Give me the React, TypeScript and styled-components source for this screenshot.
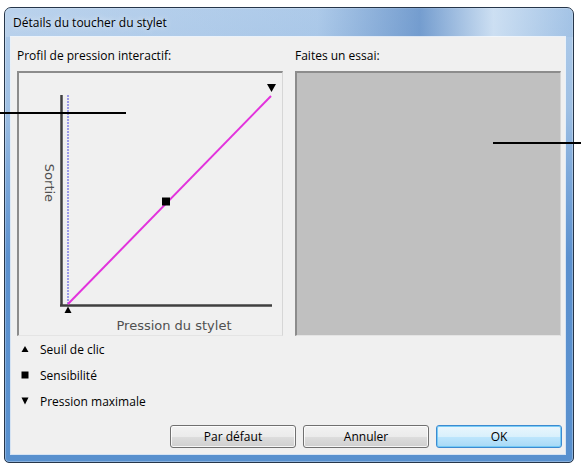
import React from "react";
import styled, { createGlobalStyle } from "styled-components";

const GlobalStyle = createGlobalStyle`
  html, body {
    margin: 0;
    padding: 0;
    background: #ffffff;
  }
  body {
    font-family: "Open Sans", "Noto Sans", sans-serif;
  }
`;

const Page = styled.div`
  position: relative;
  width: 581px;
  height: 468px;
  box-sizing: border-box;
  padding: 7px 7px 5px 4px;
  overflow: hidden;
`;

const Window = styled.div`
  height: 100%;
  box-sizing: border-box;
  display: flex;
  flex-direction: column;
  border: 1px solid #26364a;
  border-radius: 7px 7px 5px 5px;
  background: linear-gradient(
    to bottom,
    #aecbea 0%,
    #9fc0e4 22%,
    #7faadb 36%,
    #5c91cf 55%,
    #5890ce 100%
  );
  box-shadow: inset 0 0 0 1px rgba(255, 255, 255, 0.3);
`;

const TitleBar = styled.div`
  height: 29px;
  flex: none;
  display: flex;
  align-items: center;
  padding-left: 8px;
  font-size: 12px;
  color: #000;
  border-radius: 6px 6px 0 0;
  background: linear-gradient(
    to right,
    rgba(196, 216, 238, 0.55) 0%,
    rgba(170, 198, 230, 0.2) 55%,
    rgba(70, 120, 185, 0.55) 73%,
    rgba(215, 230, 245, 0.75) 86%,
    rgba(140, 178, 220, 0.3) 100%
  );
  text-shadow: 0 0 6px rgba(255, 255, 255, 0.9);
`;

const Frame = styled.div`
  flex: 1;
  display: flex;
  padding: 0 8px 8px 6px;
`;

const Client = styled.div`
  flex: 1;
  display: flex;
  flex-direction: column;
  padding: 11px 3px 6px 6px;
  background: #f0f0f0;
  box-shadow: 0 0 0 1px rgba(255, 255, 255, 0.75);
`;

const Panels = styled.div`
  display: grid;
  grid-template-columns: 266px 266px;
  column-gap: 12px;
`;

const Panel = styled.div`
  display: flex;
  flex-direction: column;
`;

const PanelLabel = styled.div`
  height: 16px;
  line-height: 16px;
  font-size: 12px;
  color: #000;
  margin-bottom: 7px;
`;

const Box = styled.div<{ $fill: string }>`
  height: 265px;
  box-sizing: border-box;
  background: ${(p) => p.$fill};
  border-top: 2px solid #8c8c8c;
  border-left: 2px solid #8c8c8c;
  border-right: 1px solid #d6d6d6;
  border-bottom: 1px solid #e4e4e4;
`;

const Legend = styled.div`
  display: flex;
  flex-direction: column;
  padding-left: 4px;
`;

const LegendRow = styled.div`
  height: 26px;
  display: flex;
  align-items: center;
  gap: 11px;
  font-size: 12px;
  color: #000;
`;

const LegendIcon = styled.svg`
  width: 8px;
  height: 8px;
  flex: none;
`;

const ButtonRow = styled.div`
  margin-top: auto;
  display: flex;
  justify-content: flex-end;
  gap: 7px;
`;

const Button = styled.button<{ $default?: boolean }>`
  width: 126px;
  height: 23px;
  box-sizing: border-box;
  font-family: inherit;
  font-size: 12px;
  color: #000;
  border-radius: 3px;
  border: 1px solid ${(p) => (p.$default ? "#3c8ad0" : "#707070")};
  background: ${(p) =>
    p.$default
      ? "linear-gradient(to bottom, #eaf6fd 0%, #d9f0fc 50%, #bee6fd 51%, #a7d9f5 100%)"
      : "linear-gradient(to bottom, #f2f2f2 0%, #ebebeb 50%, #dddddd 51%, #cfcfcf 100%)"};
  box-shadow: inset 0 0 0 1px
    ${(p) => (p.$default ? "rgba(110, 200, 245, 0.9)" : "rgba(255, 255, 255, 0.8)")};
  padding: 0;
`;

const CalloutLine = styled.div<{ $left: number; $top: number; $width: number }>`
  position: absolute;
  left: ${(p) => p.$left}px;
  top: ${(p) => p.$top}px;
  width: ${(p) => p.$width}px;
  height: 2px;
  background: #000;
`;

function PressureGraph() {
  return (
    <svg width="263" height="262" style={{ display: "block" }}>
      <line x1="49" y1="22" x2="49" y2="232" stroke="#4848e0" strokeWidth="1" strokeDasharray="2 1" />
      <line x1="42.5" y1="22" x2="42.5" y2="233" stroke="#3f3f3f" strokeWidth="2.5" />
      <line x1="41" y1="232.5" x2="253" y2="232.5" stroke="#3f3f3f" strokeWidth="2.5" />
      <line x1="49" y1="231" x2="252" y2="23" stroke="#e233dc" strokeWidth="2" />
      <rect x="143" y="124.5" width="8" height="8" fill="#000" />
      <polygon points="248,11 257,11 252.5,19" fill="#000" />
      <polygon points="45.5,240 52.5,240 49,233.5" fill="#000" />
      <text
        x="30"
        y="110"
        transform="rotate(90 30 110)"
        textAnchor="middle"
        dominantBaseline="central"
        fontFamily="DejaVu Sans, Verdana, sans-serif"
        fontSize="13"
        fill="#505050"
      >
        Sortie
      </text>
      <text
        x="155"
        y="257"
        textAnchor="middle"
        fontFamily="DejaVu Sans, Verdana, sans-serif"
        fontSize="13"
        fill="#505050"
      >
        Pression du stylet
      </text>
    </svg>
  );
}

const legendItems: { kind: "up" | "square" | "down"; label: string }[] = [
  { kind: "up", label: "Seuil de clic" },
  { kind: "square", label: "Sensibilité" },
  { kind: "down", label: "Pression maximale" },
];

function Marker({ kind }: { kind: "up" | "square" | "down" }) {
  return (
    <LegendIcon viewBox="0 0 8 8">
      {kind === "up" && <polygon points="0.5,7 7.5,7 4,1" fill="#000" />}
      {kind === "square" && <rect x="0.5" y="0.5" width="7" height="7" fill="#000" />}
      {kind === "down" && <polygon points="0.5,0.5 7.5,0.5 4,7.5" fill="#000" />}
    </LegendIcon>
  );
}

export default function App() {
  return (
    <>
      <GlobalStyle />
      <Page>
        <Window>
          <TitleBar>Détails du toucher du stylet</TitleBar>
          <Frame>
            <Client>
              <Panels>
                <Panel>
                  <PanelLabel>Profil de pression interactif:</PanelLabel>
                  <Box $fill="#f0f0f0">
                    <PressureGraph />
                  </Box>
                </Panel>
                <Panel>
                  <PanelLabel>Faites un essai:</PanelLabel>
                  <Box $fill="#c0c0c0" />
                </Panel>
              </Panels>
              <Legend>
                {legendItems.map((item) => (
                  <LegendRow key={item.label}>
                    <Marker kind={item.kind} />
                    {item.label}
                  </LegendRow>
                ))}
              </Legend>
              <ButtonRow>
                <Button>Par défaut</Button>
                <Button>Annuler</Button>
                <Button $default>OK</Button>
              </ButtonRow>
            </Client>
          </Frame>
        </Window>
        <CalloutLine $left={0} $top={112} $width={126} />
        <CalloutLine $left={493} $top={142} $width={88} />
      </Page>
    </>
  );
}
